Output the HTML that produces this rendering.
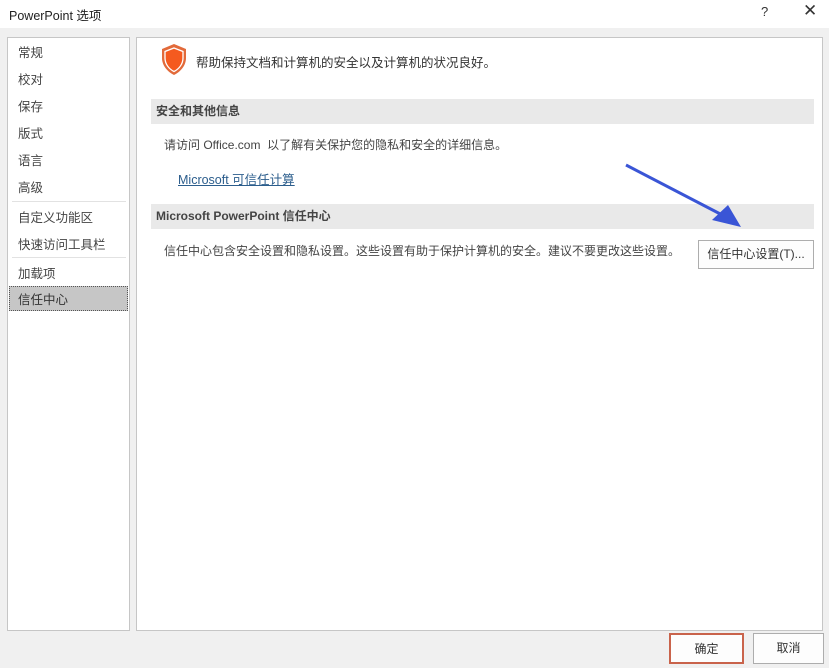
<!DOCTYPE html>
<html><head><meta charset="utf-8"><style>
*{margin:0;padding:0;box-sizing:border-box}
body{width:829px;height:668px;background:#f0f0f0;font-family:"Liberation Sans","Noto Sans CJK SC",sans-serif;font-size:12px;color:#444;position:relative;overflow:hidden}
.abs{position:absolute}
.title{left:0;top:0;width:829px;height:28px;background:#fff}
.left{left:7px;top:37px;width:123px;height:594px;background:#fff;border:1px solid #c6c6c6}
.main{left:136px;top:37px;width:687px;height:594px;background:#fff;border:1px solid #c6c6c6}
.item{position:absolute;left:10px;font-size:12.5px;color:#444}
.sep{position:absolute;left:4px;width:114px;height:1px;background:#e2e2e2}
.hdr{background:#e9e9e9;font-weight:bold;color:#444;font-size:12px;padding-left:5px;line-height:25px;height:25px}
.btn{background:#fdfdfd;border:1px solid #adadad;text-align:center;color:#333}
</style></head><body>
<div class="abs title"></div>
<div class="abs" style="left:9px;top:5px;font-size:12.5px;color:#222">PowerPoint 选项</div>
<div class="abs" style="left:761px;top:4px;font-size:13px;color:#333">?</div>
<div class="abs" style="left:803px;top:1px;font-size:17px;color:#333">✕</div>
<div class="abs left">
<div class="item" style="top:4px">常规</div>
<div class="item" style="top:31px">校对</div>
<div class="item" style="top:58px">保存</div>
<div class="item" style="top:85px">版式</div>
<div class="item" style="top:112px">语言</div>
<div class="item" style="top:139px">高级</div>
<div class="sep" style="top:163px"></div>
<div class="item" style="top:169px">自定义功能区</div>
<div class="item" style="top:196px">快速访问工具栏</div>
<div class="sep" style="top:219px"></div>
<div class="item" style="top:225px">加载项</div>
<div style="position:absolute;left:1px;top:248px;width:119px;height:25px;background:#c6c6c6;border:1px dotted #555"></div>
<div class="item" style="top:251px;color:#333">信任中心</div>
</div>
<div class="abs main"></div>
<svg class="abs" style="left:160px;top:43px" width="28" height="33" viewBox="0 0 28 33"><path d="M14 1 L26 6 L26 15 C26 23 20 29 14 32 C8 29 2 23 2 15 L2 6 Z" fill="#e26a3a"/><path d="M14 5 L23 8.5 L23 15 C23 21 19 26 14 28.5 C9 26 5 21 5 15 L5 8.5 Z" fill="#f55a1f" stroke="#fff" stroke-width="1.3"/></svg>
<div class="abs" style="left:196px;top:52px;font-size:12.5px;color:#333">帮助保持文档和计算机的安全以及计算机的状况良好。</div>
<div class="abs hdr" style="left:151px;top:99px;width:663px">安全和其他信息</div>
<div class="abs" style="left:164px;top:136px;color:#444">请访问 Office.com &nbsp;以了解有关保护您的隐私和安全的详细信息。</div>
<div class="abs" style="left:178px;top:169px;color:#2b5d8c;text-decoration:underline;font-size:12.5px">Microsoft 可信任计算</div>
<div class="abs hdr" style="left:151px;top:204px;width:663px">Microsoft PowerPoint 信任中心</div>
<div class="abs" style="left:164px;top:242px;color:#444">信任中心包含安全设置和隐私设置。这些设置有助于保护计算机的安全。建议不要更改这些设置。</div>
<div class="abs btn" style="left:698px;top:240px;width:116px;height:29px;line-height:27px">信任中心设置(T)...</div>
<svg class="abs" style="left:620px;top:160px" width="130" height="75"><path d="M6 5 L108 58" stroke="#3a55d6" stroke-width="3"/><path d="M121 67 L92 60 L108 45 Z" fill="#3a55d6"/></svg>
<div class="abs btn" style="left:669px;top:633px;width:75px;height:31px;line-height:29px;border:2px solid #c9634b">确定</div>
<div class="abs btn" style="left:753px;top:633px;width:71px;height:31px;line-height:29px">取消</div>
</body></html>
